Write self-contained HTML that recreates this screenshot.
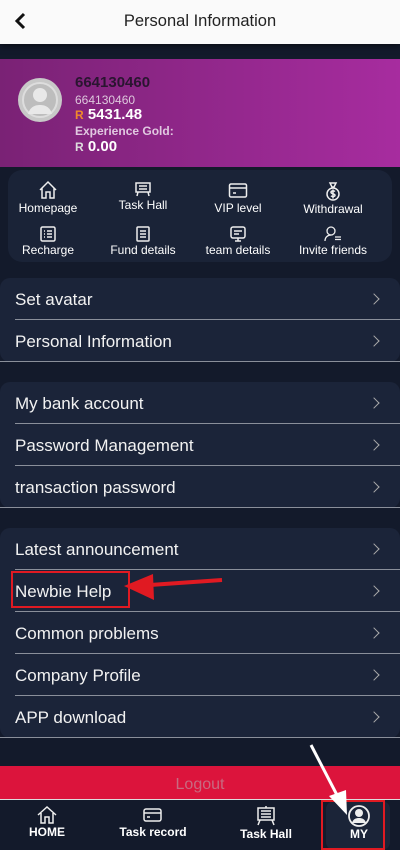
<!DOCTYPE html>
<html><head><meta charset="utf-8"><style>
*{margin:0;padding:0;box-sizing:border-box}
body{width:400px;height:850px;background:#131a2b;font-family:"Liberation Sans",Arial,sans-serif;position:relative;overflow:hidden;color:#fff}
.hdr{position:absolute;top:0;left:0;width:400px;height:44px;background:#fafafa;box-shadow:0 2px 6px rgba(0,0,0,.5);color:#222;font-size:16.5px;text-align:center;line-height:42px}
.hdr .bk{position:absolute;left:14px;top:12px}
.ban{position:absolute;top:59px;left:0;width:400px;height:108px;background:linear-gradient(90deg,#7a2275,#a72c9f)}
.av{position:absolute;left:18px;top:78px;width:44px;height:44px;border-radius:50%;background:#c8c8c8;overflow:hidden}
.grid{position:absolute;top:170px;left:8px;width:384px;height:92px;border-radius:14px;background:#1a2337}
.gi{position:absolute;width:100px;text-align:center;font-size:12px;color:#fff}
.gi svg{display:block;margin:0 auto 1px}
.card{position:absolute;left:0;width:400px;background:#1b2439;border-radius:10px}
.row{height:42px;border-bottom:1px solid #8a8f9a;margin-left:15px;font-size:17px;line-height:43px;color:#f2f2f2;position:relative}
.row:last-child{margin-left:0;padding-left:15px}
.row:after{content:"";position:absolute;right:22px;top:17px;width:7px;height:7px;border-top:1px solid #aaa;border-right:1px solid #aaa;transform:rotate(45deg)}
.lo{position:absolute;top:766px;left:0;width:400px;height:34px;background:#dc143c;color:#c86a80;font-size:16px;text-align:center;line-height:38px;border-bottom:1px solid #ddd}
.nav{position:absolute;top:801px;left:0;width:400px;height:49px;background:#131a2b}
.ni{position:absolute;top:4px;width:90px;text-align:center;font-size:12px;font-weight:bold;color:#fff}
.ni svg{display:block;margin:0 auto}
</style></head><body>
<div class="hdr"><svg class="bk" width="14" height="18" viewBox="0 0 14 18"><path d="M10 2L3 9l7 7" stroke="#111" stroke-width="3" fill="none"/></svg>Personal Information</div>
<div class="ban"></div>
<div class="av"><svg width="44" height="44" viewBox="0 0 44 44"><circle cx="22" cy="22" r="17" fill="#bdbdbd" stroke="#ddd" stroke-width="2"/><circle cx="22" cy="17" r="7" fill="#e8e8e8"/><path d="M10 36c2-7 7-9 12-9s10 2 12 9" fill="#e8e8e8"/></svg></div>
<div style="position:absolute;left:75px;top:74px;font-size:15px;font-weight:bold;color:#2a1530">664130460</div>
<div style="position:absolute;left:75px;top:93px;font-size:12px;color:#ddc8dc">664130460</div>
<div style="position:absolute;left:75px;top:106px;font-size:15px;font-weight:bold;color:#fff"><span style="color:#f08a2a;font-size:12px">R</span> 5431.48</div>
<div style="position:absolute;left:75px;top:124px;font-size:12px;font-weight:bold;color:#e0c8e0">Experience Gold:</div>
<div style="position:absolute;left:75px;top:138px;font-size:15px;font-weight:bold;color:#fff"><span style="color:#ddd;font-size:12px">R</span> 0.00</div>
<div class="grid"></div>
<div class="gi" style="left:-2px;top:180px"><svg width="20" height="20" viewBox="0 0 20 20" fill="none" stroke="#eee" stroke-width="1.5"><path d="M2 10L10 2l8 8M4 8v10h4v-6h4v6h4V8"/></svg>Homepage</div>
<div class="gi" style="left:93px;top:181px"><svg width="18" height="16" viewBox="0 0 18 16" fill="none" stroke="#eee" stroke-width="1.5"><rect x="2" y="2" width="14" height="9"/><path d="M5 5h8M5 8h8M4 11l-1 4M14 11l1 4"/></svg>Task Hall</div>
<div class="gi" style="left:188px;top:182px"><svg width="20" height="18" viewBox="0 0 20 18" fill="none" stroke="#eee" stroke-width="1.5"><rect x="1.5" y="2" width="17" height="13" rx="1.5"/><path d="M1.5 6h17M5 11h3"/></svg>VIP level</div>
<div class="gi" style="left:283px;top:181px"><svg width="18" height="20" viewBox="0 0 18 20" fill="none" stroke="#eee" stroke-width="1.5"><path d="M6 2h6l-2 4h-2z"/><circle cx="9" cy="13" r="6"/><path d="M11 10.5c-1-1-4-1-4 .8 0 2 4 1 4 3 0 1.5-3 1.7-4 .5M9 8.5v9"/></svg>Withdrawal</div>
<div class="gi" style="left:-2px;top:226px"><svg width="16" height="16" viewBox="0 0 16 16" fill="none" stroke="#eee" stroke-width="1.5"><rect x="1" y="1" width="14" height="14" rx="1.5"/><path d="M4 5h1M7 5h5M4 8h1M7 8h5M4 11h1M7 11h5"/></svg>Recharge</div>
<div class="gi" style="left:93px;top:226px"><svg width="16" height="16" viewBox="0 0 16 16" fill="none" stroke="#eee" stroke-width="1.5"><rect x="2" y="1" width="12" height="14" rx="1"/><path d="M5 5h6M5 8h6M5 11h6"/></svg>Fund details</div>
<div class="gi" style="left:188px;top:226px"><svg width="18" height="16" viewBox="0 0 18 16" fill="none" stroke="#eee" stroke-width="1.5"><rect x="2" y="1" width="14" height="11" rx="2"/><path d="M5 5h8M5 8h5M9 12v3M6 15h6"/></svg>team details</div>
<div class="gi" style="left:283px;top:226px"><svg width="18" height="16" viewBox="0 0 18 16" fill="none" stroke="#eee" stroke-width="1.3"><circle cx="7" cy="5" r="4"/><path d="M1 15c0-4 3-6 6-6M11 11h6M11 13.5h6"/></svg>Invite friends</div>

<div class="card" style="top:278px"><div class="row">Set avatar</div><div class="row">Personal Information</div></div>
<div class="card" style="top:382px"><div class="row">My bank account</div><div class="row">Password Management</div><div class="row">transaction password</div></div>
<div class="card" style="top:528px"><div class="row">Latest announcement</div><div class="row">Newbie Help</div><div class="row">Common problems</div><div class="row">Company Profile</div><div class="row">APP download</div></div>

<div style="position:absolute;left:11px;top:571px;width:119px;height:37px;border:2px solid #e01a22"></div>

<div class="lo">Logout</div>
<div class="nav">
<div style="position:absolute;left:326px;top:0;width:64px;height:49px;border-radius:8px;background:#1b2438"></div>
<div class="ni" style="left:2px"><svg width="22" height="20" viewBox="0 0 22 20" fill="none" stroke="#eee" stroke-width="1.5"><path d="M2 10L11 2l9 8M5 8v10h4v-6h4v6h4V8"/></svg>HOME</div>
<div class="ni" style="left:108px"><svg width="22" height="20" viewBox="0 0 22 20" fill="none" stroke="#eee" stroke-width="1.5"><rect x="2" y="4" width="17" height="12" rx="2"/><path d="M2 8h17M5 12h3"/></svg>Task record</div>
<div class="ni" style="left:221px"><svg width="22" height="22" viewBox="0 0 22 22" fill="none" stroke="#eee" stroke-width="1.5"><path d="M11 1v2"/><rect x="3" y="3" width="16" height="12"/><path d="M6 6h10M6 9h10M6 12h10M5 15l-2 5M17 15l2 5"/></svg>Task Hall</div>
<div class="ni" style="left:314px"><svg width="24" height="22" viewBox="0 0 24 22"><circle cx="12" cy="11" r="10" fill="none" stroke="#eee" stroke-width="1.8"/><circle cx="12" cy="8" r="4" fill="#eee"/><path d="M5 18c1-4 4-5 7-5s6 1 7 5" fill="#eee"/></svg>MY</div>
<div style="position:absolute;left:321px;top:-1px;width:64px;height:50px;border:2px solid #e01a22"></div>
</div>
<svg style="position:absolute;left:0;top:0;z-index:10" width="400" height="850"><path d="M222 580L150 585" stroke="#e01a22" stroke-width="4"/><path d="M124 586L153 574L154 600Z" fill="#e01a22"/><path d="M311 745L338 797" stroke="#fff" stroke-width="3"/><path d="M347 815L329 796L346 790Z" fill="#fff"/></svg>
</body></html>
